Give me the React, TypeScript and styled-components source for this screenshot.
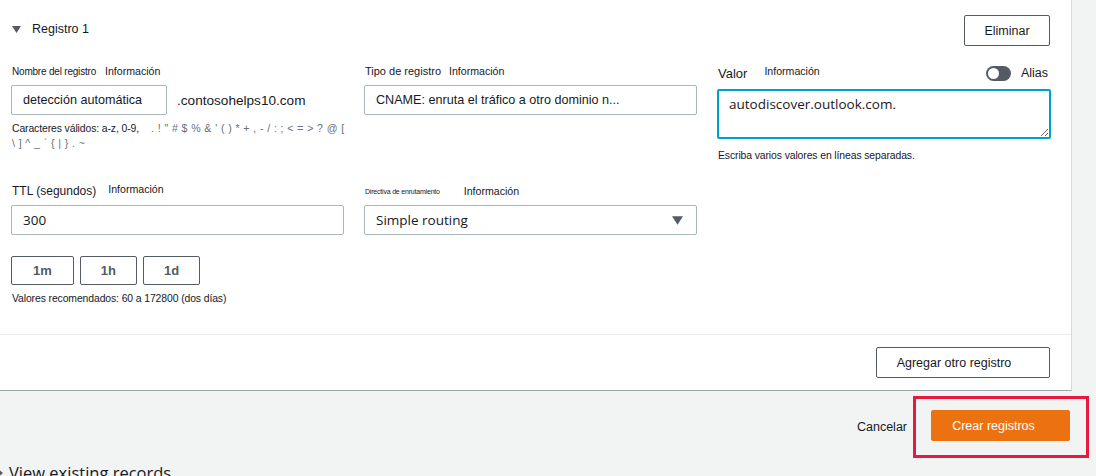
import React from "react"
import styled, { createGlobalStyle } from "styled-components"

const GlobalStyle = createGlobalStyle`
	html, body {
		margin: 0;
		padding: 0;
		background: #f2f3f3;
	}
	body {
		font-family: "Liberation Sans", Arial, sans-serif;
		color: #16191f;
	}
	* {
		box-sizing: border-box;
	}
`

function CaretDown(props: { size?: number }) {
	const w = props.size ?? 9
	return (
		<svg width={w} height={Math.round(w * 0.78)} viewBox="0 0 9 7" aria-hidden>
			<path d="M0 0 L9 0 L4.5 7 Z" fill="#545b64" />
		</svg>
	)
}

export default function App() {
	return (
		<>
			<GlobalStyle />
			<Page>
				<Panel>
					<PanelBody>
						<Header>
							<Title>
								<CaretDown />
								<span>Registro 1</span>
							</Title>
							<OutlineButton>Eliminar</OutlineButton>
						</Header>

						<Fields>
							<Field>
								<FieldHead>
									<Label size={10} gap={9}>Nombre del registro</Label>
									<Info>Información</Info>
								</FieldHead>
								<InputRow>
									<TextBox width={156}>detección automática</TextBox>
									<Suffix>.contosohelps10.com</Suffix>
								</InputRow>
								<Hint nowrap>
									Caracteres válidos: a-z, 0-9,
									<Chars>
										. ! " # $ % &amp; ' ( ) * + , - / : ; &lt; = &gt; ? @ [
									</Chars>
									<br />
									<Chars first>\ ] ^ _ ` {"{"} | {"}"} . ~</Chars>
								</Hint>
							</Field>

							<Field>
								<FieldHead>
									<Label size={11} gap={8}>Tipo de registro</Label>
									<Info>Información</Info>
								</FieldHead>
								<TextBox>CNAME: enruta el tráfico a otro dominio n...</TextBox>
							</Field>

							<Field>
								<FieldHead tall>
									<Label size={13} gap={17}>Valor</Label>
									<Info raise>Información</Info>
									<AliasToggle>
										<Switch>
											<Knob />
										</Switch>
										<span>Alias</span>
									</AliasToggle>
								</FieldHead>
								<ValueArea defaultValue="autodiscover.outlook.com." autoFocus spellCheck={false} />
								<Hint spaced>Escriba varios valores en líneas separadas.</Hint>
							</Field>

							<Field>
								<FieldHead>
									<Label size={12} gap={12}>TTL (segundos)</Label>
									<Info raise>Información</Info>
								</FieldHead>
								<TextBox value>300</TextBox>
								<QuickRow>
									<QuickButton>1m</QuickButton>
									<QuickButton>1h</QuickButton>
									<QuickButton>1d</QuickButton>
								</QuickRow>
								<Hint>Valores recomendados: 60 a 172800 (dos días)</Hint>
							</Field>

							<Field>
								<FieldHead>
									<Label size={7} gap={24}>Directiva de enrutamiento</Label>
									<Info>Información</Info>
								</FieldHead>
								<SelectBox>
									<span>Simple routing</span>
									<CaretDown size={11} />
								</SelectBox>
							</Field>
						</Fields>
					</PanelBody>

					<PanelFooter>
						<OutlineButton wide>Agregar otro registro</OutlineButton>
					</PanelFooter>
				</Panel>

				<Actions>
					<CancelLink>Cancelar</CancelLink>
					<Highlight>
						<PrimaryButton>Crear registros</PrimaryButton>
					</Highlight>
				</Actions>

				<Existing>
					<ExistingCaret />
					View existing records
				</Existing>
			</Page>
		</>
	)
}

const Page = styled.div`
	width: 1096px;
	height: 476px;
	overflow: hidden;
	background: #f2f3f3;
`

const Panel = styled.section`
	width: 1072px;
	background: #fff;
	border-right: 1px solid #d5dbdb;
	border-bottom: 1px solid #9aa6a7;
`

const PanelBody = styled.div`
	padding: 15px 0 28px 11px;
`

const Header = styled.div`
	display: flex;
	align-items: center;
	justify-content: space-between;
	padding-right: 21px;
`

const Title = styled.div`
	display: flex;
	align-items: center;
	gap: 11px;
	padding-left: 1px;
	font-size: 12.5px;
	margin-top: -3px;
`

const OutlineButton = styled.button<{ wide?: boolean }>`
	height: 31px;
	width: ${p => (p.wide ? "174px" : "86px")};
	background: #fff;
	border: 1px solid #545b64;
	border-radius: 2px;
	font-family: "Liberation Sans", Arial, sans-serif;
	font-size: 12.5px;
	color: #16191f;
	padding: ${p => (p.wide ? "0 18px 0 0" : "0")};
`

const Fields = styled.div`
	display: grid;
	grid-template-columns: 333px 333px 334px;
	column-gap: 20px;
	row-gap: 19px;
	margin-top: 16px;
	align-items: start;
`

const Field = styled.div`
	display: flex;
	flex-direction: column;
`

const FieldHead = styled.div<{ tall?: boolean }>`
	display: flex;
	align-items: center;
	height: ${p => (p.tall ? "22px" : "18px")};
	margin-bottom: 5px;
	padding-left: 1px;
`

const Label = styled.span<{ size: number; gap?: number }>`
	font-size: ${p => p.size}px;
	letter-spacing: ${p => (p.size < 11 ? "-0.2px" : "0")};
	margin-right: ${p => p.gap ?? 8}px;
`

const Info = styled.span<{ raise?: boolean }>`
	font-size: 10.6px;
	position: relative;
	top: ${p => (p.raise ? "-2px" : "0")};
`

const AliasToggle = styled.div`
	margin-left: auto;
	display: flex;
	align-items: center;
	gap: 10px;
	font-size: 12.5px;
	padding-right: 3px;
`

const Switch = styled.span`
	display: inline-flex;
	align-items: center;
	width: 25px;
	height: 15px;
	border-radius: 8px;
	background: #545b64;
	padding: 0 2px;
`

const Knob = styled.span`
	width: 11px;
	height: 11px;
	border-radius: 50%;
	background: #fff;
`

const InputRow = styled.div`
	display: flex;
	align-items: center;
	gap: 10px;
`

const TextBox = styled.div<{ width?: number; value?: boolean }>`
	width: ${p => (p.width ? `${p.width}px` : "100%")};
	height: 30px;
	border: 1px solid #aab7b8;
	border-radius: 2px;
	display: flex;
	align-items: center;
	padding-left: 11px;
	font-family: ${p => (p.value ? `"Open Sans", sans-serif` : `"Liberation Sans", Arial, sans-serif`)};
	font-size: ${p => (p.value ? "13.5px" : "12.6px")};
	white-space: nowrap;
	overflow: hidden;
`

const Suffix = styled.span`
	font-size: 13.6px;
`

const Hint = styled.div<{ spaced?: boolean; nowrap?: boolean }>`
	margin-top: ${p => (p.spaced ? "9px" : "6px")};
	padding-left: 1px;
	font-size: 10.4px;
	line-height: 15px;
	letter-spacing: -0.1px;
	white-space: ${p => (p.nowrap ? "nowrap" : "normal")};
`

const Chars = styled.span<{ first?: boolean }>`
	color: #687078;
	font-size: 10.6px;
	letter-spacing: 0.4px;
	margin-left: ${p => (p.first ? "0" : "12px")};
`

const ValueArea = styled.textarea`
	width: 334px;
	height: 50px;
	border: 2px solid #00a1c9;
	border-radius: 2px;
	padding: 4px 10px;
	font-family: "Open Sans", sans-serif;
	font-size: 13.5px;
	color: #16191f;
	caret-color: #16191f;
	outline: none;
	resize: vertical;
	margin: 0;
`

const QuickRow = styled.div`
	display: flex;
	gap: 6px;
	margin-top: 21px;
`

const QuickButton = styled.button`
	height: 29px;
	padding: 0 21px;
	background: #fff;
	border: 1px solid #545b64;
	border-radius: 2px;
	font-family: "Liberation Sans", Arial, sans-serif;
	font-weight: 700;
	font-size: 13px;
	color: #545b64;
	& + & {
		padding: 0 20px;
	}
`

const SelectBox = styled.div`
	height: 30px;
	border: 1px solid #aab7b8;
	border-radius: 2px;
	display: flex;
	align-items: center;
	justify-content: space-between;
	padding: 0 13px 0 11px;
	font-family: "Open Sans", sans-serif;
	font-size: 13.5px;
`

const PanelFooter = styled.div`
	border-top: 1px solid #eaeded;
	padding: 12px 21px 12px 0;
	display: flex;
	justify-content: flex-end;
`

const Actions = styled.div`
	display: flex;
	justify-content: flex-end;
	align-items: center;
	gap: 6px;
	margin-top: 5px;
	padding-right: 7px;
`

const CancelLink = styled.span`
	font-size: 12.5px;
	color: #16191f;
`

const Highlight = styled.div`
	border: 3px solid #e8193c;
	padding: 11px 16px 14px 15px;
`

const PrimaryButton = styled.button`
	width: 139px;
	height: 31px;
	background: #ec7211;
	border: 1px solid #ec7211;
	border-radius: 2px;
	color: #fff;
	font-family: "Liberation Sans", Arial, sans-serif;
	font-size: 12.5px;
	padding: 0 14px 0 0;
`

const Existing = styled.div`
	display: flex;
	align-items: center;
	gap: 6px;
	margin-top: 5px;
	font-family: "Open Sans", sans-serif;
	font-size: 16.5px;
	line-height: 20px;
	color: #16191f;
`

const ExistingCaret = styled.span`
	width: 0;
	height: 0;
	border-top: 4px solid transparent;
	border-bottom: 4px solid transparent;
	border-left: 5px solid #545b64;
	margin-left: -2px;
`
